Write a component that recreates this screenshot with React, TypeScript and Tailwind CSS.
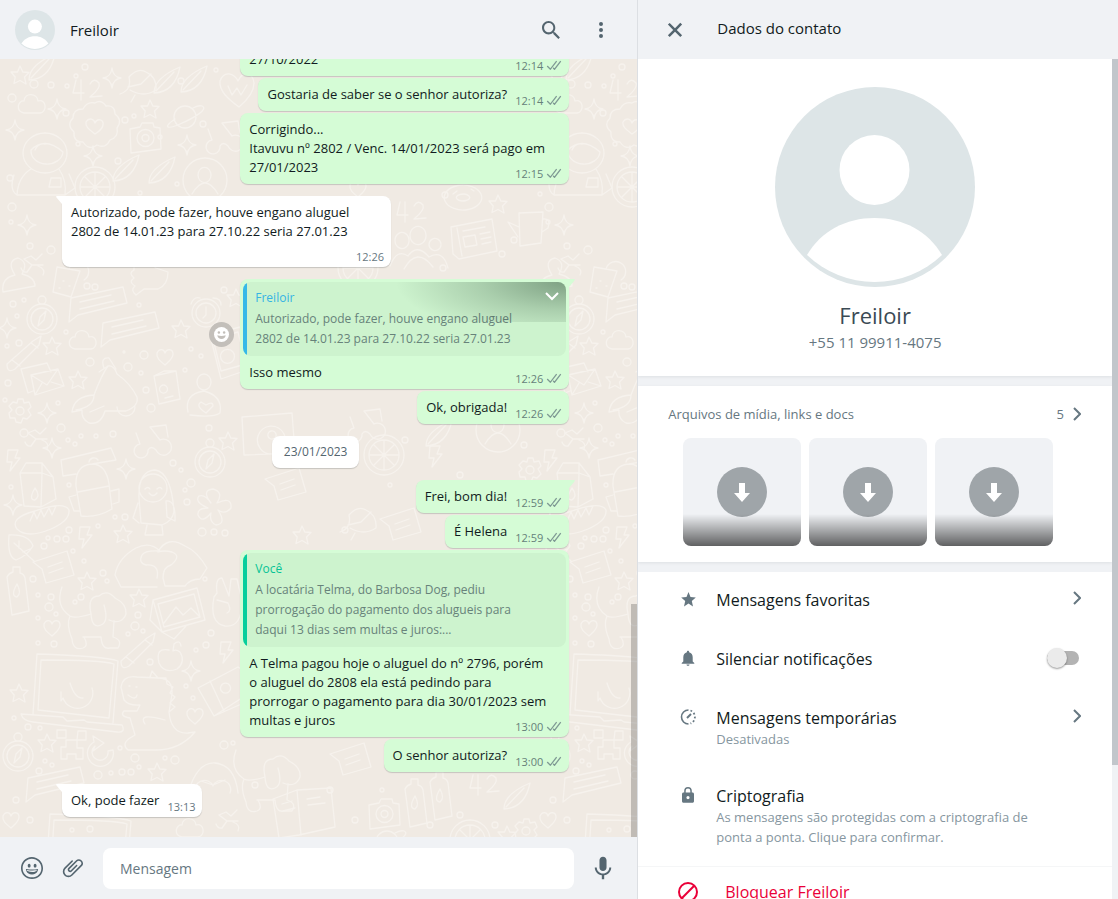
import React, { useState } from 'react';

interface Quote {
    author: string;
    lines: string[];
    tone: 'blue' | 'green';
}

interface Message {
    id: number;
    mine?: boolean;
    lines: string[];
    time: string;
    first?: boolean;
    wide?: boolean;
    hovered?: boolean;
    quote?: Quote;
}

const before: Message[] = [
    { id: 1, mine: true, wide: true, lines: ['27/10/2022'], time: '12:14' },
    { id: 2, mine: true, lines: ['Gostaria de saber se o senhor autoriza?'], time: '12:14' },
    { id: 3, mine: true, wide: true, lines: ['Corrigindo...', 'Itavuvu nº 2802 / Venc. 14/01/2023 será pago em', '27/01/2023'], time: '12:15' },
    { id: 4, first: true, wide: true, lines: ['Autorizado, pode fazer, houve engano aluguel', '2802 de 14.01.23 para 27.10.22 seria 27.01.23', ''], time: '12:26' },
    {
        id: 5, mine: true, first: true, wide: true, hovered: true, lines: ['Isso mesmo'], time: '12:26',
        quote: { author: 'Freiloir', tone: 'blue', lines: ['Autorizado, pode fazer, houve engano aluguel', '2802 de 14.01.23 para 27.10.22 seria 27.01.23'] },
    },
    { id: 6, mine: true, lines: ['Ok, obrigada!'], time: '12:26' },
];

const after: Message[] = [
    { id: 7, mine: true, first: true, lines: ['Frei, bom dia!'], time: '12:59' },
    { id: 8, mine: true, lines: ['É Helena'], time: '12:59' },
    {
        id: 9, mine: true, wide: true, time: '13:00',
        lines: ['A Telma pagou hoje o aluguel do nº 2796, porém', 'o aluguel do 2808 ela está pedindo para', 'prorrogar o pagamento para dia 30/01/2023 sem', 'multas e juros'],
        quote: { author: 'Você', tone: 'green', lines: ['A locatária Telma, do Barbosa Dog, pediu', 'prorrogação do pagamento dos alugueis para', 'daqui 13 dias sem multas e juros:...'] },
    },
    { id: 10, mine: true, lines: ['O senhor autoriza?'], time: '13:00' },
    { id: 11, first: true, lines: ['Ok, pode fazer'], time: '13:13' },
];

const ICONS = {
    search: 'M15.9 14.3H15l-.3-.3c1-1.1 1.6-2.7 1.6-4.3 0-3.7-3-6.7-6.7-6.7S3 6 3 9.7s3 6.7 6.7 6.7c1.6 0 3.2-.6 4.3-1.6l.3.3v.8l5.1 5.1 1.5-1.5-5-5.2zm-6.2 0c-2.6 0-4.6-2.1-4.6-4.6s2.1-4.6 4.6-4.6 4.6 2.1 4.6 4.6-2 4.6-4.6 4.6z',
    menu: 'M12 8a2 2 0 1 0 0-4 2 2 0 0 0 0 4zm0 2a2 2 0 1 0 0 4 2 2 0 0 0 0-4zm0 6a2 2 0 1 0 0 4 2 2 0 0 0 0-4z',
    close: 'm19.1 17.2-5.3-5.3 5.3-5.3-1.8-1.8-5.3 5.4-5.3-5.3-1.8 1.7 5.3 5.3-5.3 5.3L6.7 19l5.3-5.3 5.3 5.3 1.8-1.8z',
    smiley: 'M9.153 11.603c.795 0 1.439-.879 1.439-1.962s-.644-1.962-1.439-1.962-1.439.879-1.439 1.962.644 1.962 1.439 1.962zm-3.204 1.362c-.026-.307-.131 5.218 6.063 5.551 6.066-.25 6.066-5.551 6.066-5.551-6.078 1.416-12.129 0-12.129 0zm11.363 1.108s-.669 1.959-5.051 1.959c-3.505 0-5.388-1.164-5.607-1.959 0 0 5.912 1.055 10.658 0zM11.804 1.011C5.609 1.011.978 6.033.978 12.228s4.826 10.761 11.021 10.761S23.02 18.423 23.02 12.228c.001-6.195-5.021-11.217-11.216-11.217zM12 21.354c-5.273 0-9.381-3.886-9.381-9.159s3.942-9.548 9.215-9.548 9.548 4.275 9.548 9.548c-.001 5.272-4.109 9.159-9.382 9.159zm3.108-9.751c.795 0 1.439-.879 1.439-1.962s-.644-1.962-1.439-1.962-1.439.879-1.439 1.962.644 1.962 1.439 1.962z',
    clip: 'M1.816 15.556v.002c0 1.502.584 2.912 1.646 3.972s2.472 1.647 3.974 1.647a5.58 5.58 0 0 0 3.972-1.645l9.547-9.548c.769-.768 1.147-1.767 1.058-2.817-.079-.968-.548-1.927-1.319-2.698-1.594-1.592-4.068-1.711-5.517-.262l-7.916 7.915c-.881.881-.792 2.25.214 3.261.959.958 2.423 1.053 3.263.215l5.511-5.512c.28-.28.267-.722.053-.936l-.244-.244c-.191-.191-.567-.349-.957.04l-5.506 5.506c-.18.18-.635.127-.976-.214-.098-.097-.576-.613-.213-.973l7.915-7.917c.818-.817 2.267-.699 3.23.262.5.501.802 1.1.849 1.685.051.573-.156 1.111-.589 1.543l-9.547 9.549a3.97 3.97 0 0 1-2.829 1.171 3.975 3.975 0 0 1-2.83-1.173 3.973 3.973 0 0 1-1.172-2.828c0-1.071.415-2.076 1.172-2.83l7.209-7.211c.157-.157.264-.579.028-.814L11.5 4.36a.572.572 0 0 0-.834.018l-7.205 7.207a5.577 5.577 0 0 0-1.645 3.971z',
    mic: 'M11.999 14.942c2.001 0 3.531-1.53 3.531-3.531V4.35c0-2.001-1.53-3.531-3.531-3.531S8.469 2.35 8.469 4.35v7.061c0 2.001 1.53 3.531 3.53 3.531zm6.238-3.53c0 3.531-2.942 6.002-6.237 6.002s-6.237-2.471-6.237-6.002H3.761c0 4.001 3.178 7.297 7.061 7.885v3.884h2.354v-3.884c3.884-.588 7.061-3.884 7.061-7.885h-2z',
    star: 'M12.5 16.6 17 19.4l-1.2-5.3 4-3.6-5.3-.4-2-5-2 5-5.3.4 4 3.6L8 19.4z',
    bell: 'M12 19.8c.9 0 1.5-.6 1.5-1.4h-3c0 .8.6 1.4 1.5 1.4zm4.7-4.3v-4.2c0-2.5-1.3-4.5-3.6-5v-.5c0-.6-.5-1.1-1.1-1.1s-1.1.5-1.1 1.1v.5c-2.3.5-3.6 2.5-3.6 5v4.2l-1.6 1.5v.8h12.6v-.8z',
    lock: 'M16.5 9.5h-.7V7.8a3.8 3.8 0 0 0-7.6 0v1.7h-.7c-.8 0-1.5.7-1.5 1.5v7.2c0 .8.7 1.5 1.5 1.5h9c.8 0 1.5-.7 1.5-1.5V11c0-.8-.7-1.5-1.5-1.5zM12 16.2a1.6 1.6 0 1 1 0-3.2 1.6 1.6 0 0 1 0 3.2zm2.3-6.7H9.7V7.8a2.3 2.3 0 0 1 4.6 0z',
};

const Icon: React.FC<{ name: keyof typeof ICONS }> = ({ name }) => (
    <svg viewBox="0 0 24 24" className="h-6 w-6 shrink-0" fill="currentColor" aria-hidden="true">
        <path d={ICONS[name]} />
    </svg>
);

const TimerIcon = () => (
    <svg viewBox="0 0 24 24" className="h-6 w-6 shrink-0" fill="none" stroke="currentColor" aria-hidden="true">
        <path d="M12.5 5a7 7 0 1 0 0 14" strokeWidth="1.6" />
        <path d="M14.5 5.500a7 7 0 0 1 0 13" strokeWidth="1.8" strokeDasharray="1.8 2.1" />
        <path d="m11 13 4-4" strokeWidth="2" />
    </svg>
);

const BlockIcon = () => (
    <svg viewBox="0 0 24 24" className="h-6 w-6 shrink-0" fill="none" stroke="currentColor" strokeWidth="2" aria-hidden="true">
        <circle cx="12" cy="12" r="9" />
        <path d="M5.8 18.2 18.2 5.8" />
    </svg>
);

const Chevron = () => (
    <svg viewBox="0 0 8 14" className="h-[14px] w-2 shrink-0" fill="none" stroke="#667781" strokeWidth="2" aria-hidden="true">
        <path d="m1 1 6 6-6 6" />
    </svg>
);

const Ticks = () => (
    <svg viewBox="0 0 16 15" className="h-[15px] w-4 shrink-0" fill="#7f9a94" aria-hidden="true">
        <path d="m15.01 3.316-.478-.372a.365.365 0 0 0-.51.063L8.666 9.879a.32.32 0 0 1-.484.033l-.358-.325a.319.319 0 0 0-.484.032l-.378.483a.418.418 0 0 0 .036.541l1.32 1.266c.143.14.361.125.484-.033l6.272-8.048a.366.366 0 0 0-.064-.512zm-4.1 0-.478-.372a.365.365 0 0 0-.51.063L4.566 9.879a.32.32 0 0 1-.484.033L1.891 7.769a.366.366 0 0 0-.515.006l-.423.433a.364.364 0 0 0 .006.514l3.258 3.185c.143.14.361.125.484-.033l6.272-8.048a.365.365 0 0 0-.063-.51z" />
    </svg>
);

const Avatar: React.FC<{ className: string }> = ({ className }) => (
    <svg viewBox="0 0 200 200" className={`${className} shrink-0`} role="img" aria-label="Freiloir">
        <circle cx="100" cy="100" r="100" fill="#dde5e7" />
        <circle cx="99.5" cy="83" r="35" fill="#fff" />
        <path d="M32 168C46 144 71 131 99.5 131S153 144 167 168A98 98 0 0 1 32 168z" fill="#fff" />
    </svg>
);

// line drawings for the chat wallpaper, each one centred on 0,0
const DOODLES = {
    star: 'M0-9 2.8-3 9-2.5 4.5 2 6 9 0 5.5-6 8.5-4.8 2-9-3-2.5-3z',
    sparkle: 'M0-10Q1-1 9 0 1 1 0 10-1 1-9 0-1-1 0-10z',
    heart: 'M0 8C-5 4-9 1-8-4-6-9-1-8 0-4 2-9 8-8 8-3 8 2 3 5 0 8z',
    bigHeart: 'M2 17C-9 9-18 1-17-9-13-20-3-17 1-9 6-20 16-17 17-7 17 3 8 12 2 17zM-9-4-5 5 0-2 4 5 10-5',
    bolt: 'M-5-10H5L2-2H7L-3 11-1 2H-6z',
    bigBadge: 'M0-24Q6-28 11-21 20-22 20-13 28-7 22 1 24 10 15 13 11 22 2 18-6 24-12 15-22 15-21 5-29-2-22-9-22-18-12-18-8-26 0-24zM0 7C-5 3-10 0-9-5-6-10-1-8 0-4 2-9 9-8 8-2 7 3 3 5 0 7z',
    camera: 'M-15-9-5-11-3-15 8-15 9-11 15-10 16 11-14 15zM9 0A8 8 0 1 1-8 0 8 8 0 0 1 9 0zM4 0A3 3 0 1 1-3 0 3 3 0 0 1 4 0z',
    planet: 'M11 2A11 11 0 1 1-11 2 11 11 0 0 1 11 2zM-10 4C-22 12-19 15-5 9 9 3 24-6 17-9Q14-10 8-7',
    cloud: 'M-8 8C-17 6-14-5-8-4-7-13 5-12 6-4 14-7 16 7 8 8z',
    astronaut: 'M22 0A22 20 0 1 1-22 0 22 20 0 0 1 22 0zM18-1A16 13 0 1 1-14-3Q0-17 18-1M-10-3Q-7-10 0-9M-14 16Q-27 24-28 42H20Q22 28 14 16M-28 42Q-36 37-31 22M20 42 30 35 24 21M6 25H16V34H4z',
    glasses: 'M-14-8-10 3A7 7 0 1 0-2 9Q1 4 6 9A8 8 0 1 0 10-1L0-14 16-16 18-4',
    person: 'M22 0A22 22 0 1 1-22 0 22 22 0 0 1 22 0zM6-5A6 7 0 1 1-7-5 6 7 0 0 1 6-5zM-13 14Q0-8 13 14',
    number: 'M-12-10-15 3H-4M-7-10V10M2-6Q6-13 11-7 13-2 2 7L14 6',
    bird: 'M-20 12Q-8 8-11-5-2-15 6-10 17-5 16 8 4 16-10 8M-12 5 1 2 11-8M-5 13-9 20',
    feather: 'M-14 13Q-14-2 12-13 7 12-14 13zM-12 11 6-8',
    portrait: 'M-15 16Q-17 2-3-1-12-15 0-18 11-14 4-2 17 1 17 10z',
    drink: 'M-9-12 14-8 5 18-13 13zM3-10A10 10 0 1 1 18 1M-3 2h1M3 7h1M-7 9h1',
    compass: 'M15 3A15 15 0 1 1-15 3 15 15 0 0 1 15 3zM11 3A11 11 0 1 1-11 3 11 11 0 0 1 11 3zM4-16A4 4 0 1 1-4-16 4 4 0 0 1 4-16zM4-5 2 4-4 10-2 1z',
    chat: 'M-27-7 25-18 29-2-20 10-29 17zM-18-3 13-10M-18 4 16-4',
    envelope: 'M-22-12 4-18 8-9M-22-12-15 12-10 10M-12-6 15-12 21 5-8 14zM-12-6 4 4 15-12M-8 14-1 2M21 5 8 1',
    clock: 'M14 0A14 14 0 1 1-14 0 14 14 0 0 1 14 0zM10 0A10 10 0 1 1-10 0 10 10 0 0 1 10 0zM0-6V2L-3 5M-15-9Q-12-17-6-15M7-15Q15-15 15-8',
    scooter: 'M-32 18Q-30 2-10 1-2-20 4-28Q10-29 13-20 27-10 33 3 35 12 22 17H1Q-3 31-15 29-23 25-22 16zM4-28-5-22M0-26Q-4-37 5-36L12-25M31 13A9 9 0 1 1 13 13M-14 18 0 12M-28 16Q-10 13-10 1',
    passport: 'M-14-12 8-17 12 11-9 16zM-14-12-4-17 8-17M-2-2A4 4 0 1 1-7-2 4 4 0 0 1-2-2M-3 10 5 8',
    hugger: 'M7-18A7 8 0 1 1-7-18 7 8 0 0 1 7-18zM-16 12Q-20-6 0-9 19-4 16 13 9 18-14 15M2 13Q-9 6-3 2L2 5Q9 1 9 6z',
    phone: 'M-18-20 12-28 22 14-7 24zM-15-16 10-23 18 9-7 16zM5-3A7 7 0 1 1-6-3 7 7 0 0 1 5-3',
    hand: 'M-14-17Q0-20 8-12L20-8Q20 5 10 9L-4 9-12 15Q-18 10-13 6-20 2-14-2-20-7-14-10z',
    scissors: 'M-9-5-2-8 3-4 9-10M-9-5-1 1 10 1M-1 1-6 8Q-10 9-12 4M5 2Q13 5 10 11',
    gear: 'M-2-12H3L4-8 9-9 11-4 8-1 11 4 7 8 3 7 1 12-4 11-5 7-10 7-11 2-8-1-11-5-7-9-3-8zM4 0A4 4 0 1 1-4 0 4 4 0 0 1 4 0',
    carton: 'M-18-12H4L3 22-14 21zM-18-12-12-22H4L4-12 15-8 18 14 3 22M4-22 15-8M-3 3Q-10 15-3 15 3 11-3 3',
    backpack: 'M-16 2Q-17-19 0-20 14-20 17 0L20 25Q5 34-11 32zM-16-10-29-8-31-24 19-36 24-24 0-20M-14 8 17 2M-16 11-23 13-18 27-12 27M19 7 27 5 27 18 21 20M-3-22A5 5 0 0 1 6-24',
    penguin: 'M-14-1Q-15-28 2-29 18-27 21 12 20 22 9 26L-12 24zM14-11A14 14 0 1 1-14-11 14 14 0 0 1 14-11zM-8-10q3-3 5 0M4-10q3-3 5 0M-4-6q4 5 8 0M-15 4-20 19-14 24M13 2Q23 1 22 22L14 18zM-6 26-8 36H10L9 27',
    flower: 'M-2-4Q-12-17 0-18 11-15 4-4 19-11 18 1 12 8 5 3 14 17 3 18-4 15-2 6-11 17-15 8-16 1-5 1-19-5-14-11-8-13-2-4z',
    bread: 'M-26 10Q-34-1-8-8 21-18 26-9 27 2 8 10-16 20-26 10zM-13 2-9-7-6 0-2-9 1-2 6-11 9-4 13-13',
    leaf: 'M-12-13Q8-14 12-2 6 8-5 12-14 9-12-13zM-7-5 13 13M-2 0V-7M2 4 9 1',
    bubble: 'M-20-6 14-17 21 7-7 15-11 1zM-5-1 9-6M-4 5 10 0',
    hearthand: 'M-3 19Q0 5-14 6-22 4-18-4-15-9 0-8-10-18-24-11-42-1-45 16L-39 28H-3M3 19Q3 8 11 6 22-3 12-7 4-9-2-7Q7-24 25-13 37-8 47 9L40 20Q30 20 25 27H5z',
    bottle: 'M-10-16Q-8-20-4-21V-26H3V-20Q7-19 8-15L12 18-5 22zM0-9Q-7 3 0 4 5 0 0-9',
    dog: 'M-29-30Q-36-11-21-1-16 2 0-3-4-21 8-21 16-28 24-19 36-13 35-3 31 8 18 3M-21-1Q-25 8-19 22-18 34-8 31Q-2 29-7 20M-8 20H10Q11 33 19 31H27Q32 23 22 20L23 4M0-3Q1 12 10 8 18 5 13-12',
    picture: 'M-25-12 19-24 27 8-16 20zM-20-8 16-18 22 5-14 15zM-14 11-2-5 5 3 13-4 22 5M-25-12-28 8-16 20-4 27 8 14',
    peace: 'M-13-6Q-18 20-2 23 15 25 15-2L10-24H4L2-7-5-25Q-12-25-10-10zM-10-3 1 0Q5 8 0 10',
    laptop: 'M-34 24-30-36Q37-34 51-29L46 33M-29 20-26-30Q35-30 47-26L42 28zM-46 24-4 27 0 31 17 30 20 32 55 35Q59 43 50 42L-34 32Q-44 31-46 24M25-2A15 15 0 1 1-4 8L-6 11-6 2M3-7Q8 9 16 8',
    dino: 'M-34-17Q-32-29-18-27L3-26Q18-26 17-10L14 8Q16 30 33 29L40 28Q25 46 1 46H-27Q-34 40-25 34L-20 31-25 14Q-36 12-31 7H-18L-15 1Q-26 2-31-4zM-10 20Q-18 8 10 16M-26-18h1M-19-17h1M-27-9Q-19-3-18-9M-5-27-3-33 3-26 11-26 12-20 18-17 15-11 20-7 15-1 20 3 14 8',
    apple: 'M-2-9Q-16-12-12 4-7 15 6 10 15 3 9-7 5-10 2-8L3-15Q9-20 10-13',
    pencil: 'M-18 9 8-14 16-19 14-10-10 14Q-18 19-18 9zM-13 5-5 11M6-12 13-7',
    chest: 'M-24-2 16-23 35-11 31 9-8 26zM-12-9 2 21M8-4A5 5 0 1 1-1-4 5 5 0 0 1 8-4M-8 26 35-2',
    pixel: 'M-15-16H-6V-8H-15zM6-15H14V-6H5zM-6-6H5V2H11V13H4V8H-5V13H-11V1H-6z',
    refresh: 'M11-1A13 13 0 1 1-8-9L-9-15 2-8-9 0-7-5A8 8 0 1 0 6 0z',
    book: 'M-30-12-6-21 28-23 32 16-4 24-24 27zM-6-21-2 24M4-12 17-14M5-6 22-8M-21-7-11-10M-20 0-8-3',
    newspaper: 'M-22-13 19-21 24 11-14 19-20 14zM-16-12-11 16M-10-9 12-13M-10-3 2-5 4 5-8 7zM7-6 17-8M8-1 18-3M9 4 18 2',
    cup: 'M-12-17 12-18 10 13-11 16zM-12-3-23-8-13 7M12-11Q20-12 17-2L11 2',
    people: 'M-8-12A7 8 0 1 1-8-13zM9-17A8 9 0 1 1 9-18zM24-8A6 6 0 1 1 24-9M-27 13Q-20-5-9 3 0-10 12 4 26-4 31 15M-13 16Q0-7 16 14',
    donut: 'M18-3A18 12 0 1 1-18 4 18 12 0 0 1 18-3zM6-1A6 3 0 1 1-6 2 6 3 0 0 1 6-1M-10-3-6-6M8-8l3 2',
    turntable: 'M-30-17 20-21 23 19-28 21zM12 0A14 14 0 1 1-14 2 14 14 0 0 1 12 0zM4 0A4 4 0 1 1-4 2 4 4 0 0 1 4 0',
    wheel: 'M20 0A20 20 0 1 1-20 0 20 20 0 0 1 20 0zM15 0A15 15 0 1 1-15 0 15 15 0 0 1 15 0M0-15V15M-15 0H15M-10-10 10 10M10-10-10 10',
    owl: 'M-25 20Q-16-11 2-10 22-8 25 20M-17 20A8 8 0 0 1 0 13 8 8 0 0 1 17 20M-12 8 0 12 12 7',
};

type Placed = [keyof typeof DOODLES, number, number];

const WALLPAPER: Placed[] = [
    ['feather', 43, 67], ['star', 20, 75], ['number', 88, 90], ['sparkle', 112, 78], ['bird', 140, 82], ['feather', 168, 80], ['feather', 195, 79],
    ['cloud', 32, 105], ['sparkle', 57, 109], ['bigBadge', 95, 127], ['star', 150, 109], ['camera', 145, 138], ['planet', 185, 115], ['bigHeart', 237, 90],
    ['sparkle', 15, 130], ['astronaut', 45, 153], ['sparkle', 93, 156], ['glasses', 222, 137], ['sparkle', 187, 145], ['feather', 127, 168], ['feather', 163, 170],
    ['person', 205, 180], ['wheel', 95, 187], ['sparkle', 27, 225], ['portrait', 18, 276], ['scissors', 33, 264], ['drink', 66, 279], ['hand', 148, 280], ['star', 236, 298],
    ['compass', 42, 316], ['chat', 98, 305], ['chat', 130, 330], ['clock', 206, 313], ['sparkle', 7, 328], ['star', 181, 329], ['cloud', 83, 341], ['star', 52, 346],
    ['heart', 165, 357], ['pencil', 25, 355], ['envelope', 43, 381], ['star', 78, 380], ['scooter', 104, 394], ['passport', 168, 388], ['hugger', 204, 400], ['phone', 228, 355],
    ['gear', 20, 411], ['sparkle', 47, 413], ['scissors', 37, 438], ['sparkle', 52, 448], ['bolt', 13, 460], ['carton', 38, 485], ['backpack', 92, 484], ['glasses', 150, 441],
    ['sparkle', 126, 469], ['penguin', 153, 499], ['compass', 210, 459], ['star', 228, 441], ['flower', 213, 507], ['sparkle', 13, 505], ['bread', 43, 519], ['bolt', 85, 537],
    ['star', 123, 534], ['leaf', 21, 548], ['bubble', 53, 568], ['star', 87, 581], ['hearthand', 160, 559], ['bottle', 17, 593], ['dog', 91, 617], ['star', 139, 598],
    ['picture', 178, 612], ['peace', 227, 603], ['heart', 52, 628], ['apple', 171, 659], ['pencil', 139, 652], ['bolt', 226, 652], ['laptop', 67, 690], ['sparkle', 191, 671],
    ['dino', 155, 704], ['chest', 222, 690], ['star', 19, 693], ['heart', 195, 716], ['compass', 18, 753], ['star', 47, 743], ['pixel', 72, 746], ['refresh', 102, 751],
    ['star', 157, 772], ['owl', 213, 773], ['chat', 55, 785], ['heart', 11, 820], ['cloud', 190, 829], ['laptop', 80, 850], ['scissors', 228, 820],
    ['book', 303, 811], ['camera', 384, 814], ['bottle', 415, 805], ['bottle', 440, 798], ['number', 485, 785], ['feather', 518, 796], ['wheel', 470, 840], ['star', 507, 835],
    ['gear', 526, 831], ['planet', 387, 840], ['donut', 463, 197], ['number', 412, 212], ['star', 498, 204], ['heart', 358, 189], ['newspaper', 473, 240], ['cup', 531, 230],
    ['people', 417, 253], ['turntable', 272, 434], ['glasses', 364, 425], ['wheel', 384, 455], ['person', 498, 430], ['feather', 440, 433], ['bolt', 435, 456], ['gear', 530, 470],
    ['bubble', 400, 525], ['bubble', 285, 485], ['star', 302, 535], ['bird', 360, 520], ['star', 440, 292], ['wheel', 358, 268], ['bubble', 350, 760], ['dog', 265, 780],
];

// x, y, radius
const DOTS = [
    [34, 84, 4], [67, 86, 2], [85, 67, 3], [76, 76, 2], [12, 98, 4], [51, 85, 3], [66, 113, 3], [125, 120, 3], [134, 116, 2], [203, 124, 3], [160, 137, 2], [78, 144, 2], [10, 178, 3], [181, 81, 3],
    [216, 70, 2], [118, 161, 3], [140, 193, 2], [177, 184, 2], [12, 207, 4], [11, 222, 2], [30, 246, 3], [51, 250, 4], [87, 286, 3], [95, 287, 3], [24, 300, 2], [13, 304, 3], [139, 305, 2],
    [224, 290, 3], [17, 316, 2], [66, 332, 2], [7, 346, 2], [19, 343, 3], [90, 362, 4], [128, 367, 4], [144, 355, 4], [124, 352, 1], [141, 373, 2], [191, 349, 2], [201, 356, 2], [185, 370, 2],
    [8, 383, 3], [146, 390, 3], [58, 403, 2], [151, 408, 4], [5, 400, 2], [24, 433, 4], [61, 428, 4], [81, 436, 2], [96, 436, 2], [113, 434, 3], [68, 440, 2], [75, 444, 2], [209, 428, 3],
    [11, 487, 2], [69, 485, 2], [173, 463, 3], [181, 470, 2], [191, 483, 4], [185, 490, 2], [187, 502, 3], [125, 517, 3], [115, 517, 2], [98, 526, 2], [69, 530, 3], [57, 539, 3], [44, 546, 3],
    [48, 538, 2], [66, 539, 3], [73, 551, 2], [84, 561, 2], [202, 532, 4], [214, 532, 3], [225, 533, 3], [103, 573, 3], [107, 581, 2], [33, 579, 3], [38, 595, 2], [51, 597, 3], [49, 607, 4],
    [56, 614, 2], [38, 618, 2], [81, 597, 3], [75, 602, 2], [38, 643, 2], [54, 644, 3], [138, 615, 3], [135, 626, 4], [143, 631, 2], [128, 634, 2], [205, 579, 2], [211, 633, 3], [206, 645, 3],
    [196, 650, 2], [150, 662, 3], [186, 686, 2], [193, 698, 2], [14, 718, 2], [28, 727, 3], [40, 728, 2], [120, 748, 2], [135, 758, 4], [139, 767, 2], [165, 758, 2], [175, 760, 4], [45, 761, 2],
    [52, 765, 2], [39, 771, 3], [98, 775, 4], [111, 773, 2], [122, 772, 3], [131, 772, 3], [224, 745, 4], [233, 743, 2], [16, 800, 3], [30, 820, 3], [72, 830, 2], [90, 829, 3], [255, 785, 3],
    [330, 790, 3], [355, 820, 3], [460, 815, 3], [495, 825, 3], [445, 195, 3], [514, 240, 3], [502, 254, 3], [443, 268, 3], [450, 288, 3], [405, 440, 3], [524, 445, 3], [460, 475, 3],
    [382, 790, 2], [430, 825, 3], [345, 530, 3], [390, 485, 2], [540, 194, 2], [340, 445, 3],
];

const Wallpaper = () => (
    <svg className="absolute inset-0 h-full w-full" aria-hidden="true">
        <defs>
            <g id="doodles" fill="none" stroke="#f6f2ed" strokeWidth="1.3" strokeLinecap="round" strokeLinejoin="round">
                {WALLPAPER.map(([name, x, y], i) => (
                    <path key={i} d={DOODLES[name]} transform={`translate(${x} ${y - 59})`} />
                ))}
                {DOTS.map(([x, y, r], i) => (
                    <circle key={i} cx={x} cy={y - 59} r={r} />
                ))}
            </g>
        </defs>
        <use href="#doodles" />
        <use href="#doodles" x="537" />
    </svg>
);

const QuoteBox: React.FC<{ quote: Quote; hovered?: boolean }> = ({ quote, hovered }) => {
    const blue = quote.tone === 'blue';
    return (
        <div className="relative mx-[3px] mt-[3px] mb-1.5 flex overflow-hidden rounded-lg bg-[#cdf3ce] whitespace-nowrap">
            <div className={`w-1 shrink-0 ${blue ? 'bg-[#35b9e8]' : 'bg-[#06cf9c]'}`} />
            <div className="pt-[5px] pr-3 pb-[7px] pl-2 text-xs leading-5 text-[#67827a]">
                <div className={`text-xs leading-[22px] font-medium ${blue ? 'text-[#35b4e4]' : 'text-[#06c395]'}`}>{quote.author}</div>
                {quote.lines.map(line => (
                    <div key={line}>{line}</div>
                ))}
            </div>
            {hovered && (
                <button aria-label="Menu da mensagem" className="absolute top-0 right-0 flex h-10 w-44 justify-end bg-[radial-gradient(170px_56px_at_top_right,rgba(30,60,40,0.45)_0%,rgba(30,60,40,0.2)_50%,transparent_100%)] pt-[10px] pr-[7px]">
                    <svg viewBox="0 0 14 9" className="h-[9px] w-[14px]" fill="none" stroke="#fff" strokeWidth="2">
                        <path d="m1 1 6 6 6-6" />
                    </svg>
                </button>
            )}
        </div>
    );
};

const Bubble: React.FC<{ message: Message }> = ({ message }) => {
    const { mine, first, wide, quote, hovered } = message;
    const rest = message.lines.slice(0, -1);
    const last = message.lines[message.lines.length - 1];

    return (
        <div className={`flex items-center gap-1.5 ${first ? 'mt-3' : 'mt-0.5'} ${mine ? 'justify-end' : 'justify-start'}`}>
            {hovered && (
                <button aria-label="Reagir" className="flex h-[25px] w-[25px] items-center justify-center rounded-full bg-[#c3bfba]">
                    <svg viewBox="0 0 16 16" className="h-[15px] w-[15px]">
                        <circle cx="8" cy="8" r="8" fill="#fff" />
                        <circle cx="5.2" cy="5.8" r="1.3" fill="#c3bfba" />
                        <circle cx="10.8" cy="5.8" r="1.3" fill="#c3bfba" />
                        <path d="M3.5 8.8q4.5 1.5 9 0-.8 4-4.5 4t-4.5-4z" fill="#c3bfba" />
                    </svg>
                </button>
            )}
            <div className={`relative rounded-lg shadow-[0_1px_1px_rgba(11,20,26,0.18)] ${mine ? 'bg-[#d5fcd6]' : 'bg-white'} ${wide ? 'w-[329px]' : ''}`}>
                {first && (
                    <svg viewBox="0 0 14 11" className={`absolute top-0 h-[11px] w-[14px] ${mine ? '-right-1.5' : '-left-1.5 -scale-x-100'}`}>
                        <path d="M0 0H13Q14.500 .3 13.500 1.500L8 8V11H0z" fill={mine ? '#d5fcd6' : '#fff'} />
                    </svg>
                )}
                {quote && <QuoteBox quote={quote} hovered={hovered} />}
                <div className={`relative pr-[7px] pb-[7px] pl-[9px] text-[13px] leading-[19px] whitespace-nowrap text-[#111b21] ${quote ? 'pt-px' : 'pt-[7px]'}`}>
                    {rest.map(line => (
                        <div key={line}>{line}</div>
                    ))}
                    <div className="flex h-[19px] items-end justify-between gap-2">
                        <span>{last}</span>
                        <span className={`-mb-1 flex items-center gap-[3px] text-[11px] leading-[15px] ${mine ? 'text-[#66817a]' : 'text-[#667781]'}`}>
                            {message.time}
                            {mine && <Ticks />}
                        </span>
                    </div>
                </div>
            </div>
        </div>
    );
};

const Chat = () => {
    const [draft, setDraft] = useState('');

    return (
        <main className="flex min-w-0 flex-1 flex-col">
            <header className="flex h-[59px] shrink-0 items-center bg-[#f0f2f5] pr-6 pl-[15px] text-[#54656f]">
                <Avatar className="h-10 w-10" />
                <h1 className="ml-[15px] flex-1 pt-0.5 text-[15px] text-[#111b21]">Freiloir</h1>
                <button aria-label="Pesquisar" className="mr-[26px]"><Icon name="search" /></button>
                <button aria-label="Menu"><Icon name="menu" /></button>
            </header>

            <div className="relative flex min-h-0 flex-1 flex-col justify-end overflow-hidden bg-[#f0eae3]">
                <Wallpaper />
                <div className="relative flex flex-col pr-[68px] pb-5 pl-[62px]">
                    {before.map(m => <Bubble key={m.id} message={m} />)}
                    <div className="mt-3 self-center rounded-lg bg-white px-3 text-xs leading-8 text-[#54656f] shadow-[0_1px_1px_rgba(11,20,26,0.18)]">
                        23/01/2023
                    </div>
                    {after.map(m => <Bubble key={m.id} message={m} />)}
                </div>
                <div className="absolute right-0 bottom-0 h-[30%] w-1.5 bg-black/20" />
            </div>

            <footer className="flex h-[62px] shrink-0 items-center bg-[#f0f2f5] px-5 text-[#54656f]">
                <button aria-label="Emojis"><Icon name="smiley" /></button>
                <button aria-label="Anexar" className="ml-[17px]"><Icon name="clip" /></button>
                <input
                    type="text"
                    aria-label="Mensagem"
                    placeholder="Mensagem"
                    value={draft}
                    onChange={(e) => setDraft(e.target.value)}
                    className="mr-[17px] ml-[18px] h-[41px] min-w-0 flex-1 rounded-lg bg-white px-[17px] text-sm text-[#111b21] placeholder-[#667781] focus:outline-none"
                />
                <button aria-label="Gravar áudio" className="mr-0.5"><Icon name="mic" /></button>
            </footer>
        </main>
    );
};

interface RowProps {
    icon: React.ReactNode;
    title: string;
    detail?: string;
    children?: React.ReactNode;
}

const Row: React.FC<RowProps> = ({ icon, title, detail, children }) => (
    <div className="flex min-h-[59px] items-start pt-[17px] pr-[31px] pb-[19px] pl-[38px]">
        <span className="-mt-0.5 text-[#667781]">{icon}</span>
        <div className="ml-4 flex-1">
            <div className="text-base leading-[22px] text-[#111b21]">{title}</div>
            {detail && <p className="max-w-[330px] text-[13px] leading-5 text-[#8696a0]">{detail}</p>}
        </div>
        {children}
    </div>
);

const ContactInfo = () => {
    const [muted, setMuted] = useState(false);

    return (
        <aside className="flex w-[43%] shrink-0 flex-col border-l border-[#dcdfe3] bg-[#f0f2f5]">
            <header className="flex h-[59px] shrink-0 items-center pl-[25px]">
                <button aria-label="Fechar" className="text-[#54656f]"><Icon name="close" /></button>
                <h2 className="ml-[30px] pb-[3px] text-[15px] leading-5 text-[#111b21]">Dados do contato</h2>
            </header>

            <div className="flex min-h-0 flex-1">
                <div className="flex min-w-0 flex-1 flex-col gap-2.5 overflow-hidden">
                    <section className="flex shrink-0 flex-col items-center bg-white pt-7 pb-[23px] shadow-[0_1px_3px_rgba(11,20,26,0.08)]">
                        <Avatar className="h-[200px] w-[200px]" />
                        <h2 className="mt-3 text-[22px] leading-8 text-[#3b4a54]">Freiloir</h2>
                        <p className="text-[15px] leading-[22px] text-[#667781]">+55 11 99911-4075</p>
                    </section>

                    <section className="shrink-0 bg-white pt-[18px] pb-4 shadow-[0_1px_3px_rgba(11,20,26,0.08)]">
                        <button className="flex w-full items-center pr-[31px] pl-[30px] text-[13px] leading-5 text-[#667781]">
                            <span className="flex-1 text-left">Arquivos de mídia, links e docs</span>
                            <span className="mr-[9px]">5</span>
                            <Chevron />
                        </button>
                        <div className="mt-3.5 flex gap-2 pl-[45px]">
                            {[1, 2, 3].map(n => (
                                <button key={n} aria-label={`Baixar mídia ${n}`} className="relative flex h-[108px] w-[118px] items-center justify-center overflow-hidden rounded-lg bg-[#f0f2f5]">
                                    <span className="flex h-[50px] w-[50px] items-center justify-center rounded-full bg-[#9fa5a9]">
                                        <svg viewBox="0 0 16 19" className="h-[19px] w-4" fill="#fff">
                                            <path d="M5 0h6v10h5l-8 9-8-9h5z" />
                                        </svg>
                                    </span>
                                    <span className="absolute inset-x-0 bottom-0 h-8 bg-linear-to-b from-transparent to-black/60" />
                                </button>
                            ))}
                        </div>
                    </section>

                    <section className="shrink-0 bg-white">
                        <Row icon={<Icon name="star" />} title="Mensagens favoritas">
                            <span className="mt-0.5"><Chevron /></span>
                        </Row>
                        <Row icon={<Icon name="bell" />} title="Silenciar notificações">
                            <input
                                type="checkbox"
                                role="switch"
                                aria-label="Silenciar notificações"
                                checked={muted}
                                onChange={(e) => setMuted(e.target.checked)}
                                className="mt-[3px] mr-0.5 flex h-3.5 w-8 appearance-none items-center rounded-full bg-[#b3b3b3] before:h-5 before:w-5 before:shrink-0 before:rounded-full before:bg-[#ebebeb] before:shadow-[0_1px_2px_rgba(0,0,0,0.4)] checked:justify-end checked:bg-[#00a884]"
                            />
                        </Row>
                        <Row icon={<TimerIcon />} title="Mensagens temporárias" detail="Desativadas">
                            <span className="mt-0.5"><Chevron /></span>
                        </Row>
                        <Row icon={<Icon name="lock" />} title="Criptografia" detail="As mensagens são protegidas com a criptografia de ponta a ponta. Clique para confirmar." />
                        <button className="flex w-full items-center gap-[25px] border-t border-[#f5f6f7] pt-[13px] pb-5 pl-[38px] text-base leading-[22px] text-[#ea0038]">
                            <BlockIcon />
                            Bloquear Freiloir
                        </button>
                    </section>
                </div>
                <div className="w-1.5 shrink-0 bg-[#f0f2f5]">
                    <div className="h-[84%] bg-[#c2c6cb]" />
                </div>
            </div>
        </aside>
    );
};

export default function App() {
    return (
        <div className="flex h-screen overflow-hidden bg-[#f0f2f5] font-['Open_Sans',sans-serif]">
            <Chat />
            <ContactInfo />
        </div>
    );
}
